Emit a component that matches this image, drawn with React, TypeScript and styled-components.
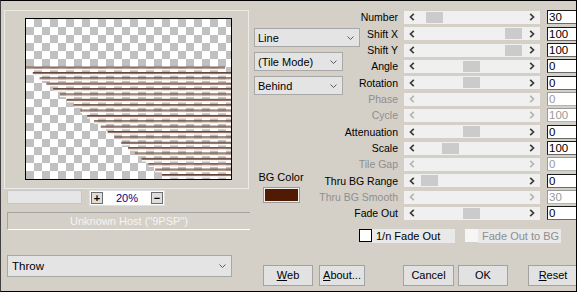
import React from 'react';
import styled, { createGlobalStyle } from 'styled-components';

const GlobalStyle = createGlobalStyle`
  html, body {
    margin: 0;
    padding: 0;
    background: #d4d0c8;
  }
  body {
    font-family: "Liberation Sans", Arial, sans-serif;
    font-size: 10.5px;
    color: #000;
  }
`;

const Window = styled.div`
  box-sizing: border-box;
  width: 577px;
  height: 292px;
  border: 1px solid #000;
  border-left-color: #404040;
  background: #d4d0c8;
  display: flex;
  overflow: hidden;
`;

const LeftColumn = styled.div`
  box-sizing: border-box;
  width: 249px;
  flex: none;
  padding: 9px 0 0 3px;
  display: flex;
  flex-direction: column;
`;

const PreviewFrame = styled.div`
  box-sizing: border-box;
  width: 245px;
  height: 179px;
  border: 1px solid #ecebe6;
  padding: 7px 0 0 20px;
`;

const PreviewBox = styled.div`
  width: 205px;
  height: 160px;
  border: 1px solid #000;
  svg {
    display: block;
  }
`;

const ZoomRow = styled.div`
  display: flex;
  margin: 1px 0 0 3px;
  gap: 7px;
`;

const ZoomBlank = styled.div`
  box-sizing: border-box;
  width: 75px;
  height: 14px;
  background: #e6e6e6;
  border: 1px solid #c6c6c6;
`;

const ZoomControl = styled.div`
  box-sizing: border-box;
  width: 76px;
  height: 16px;
  background: #fff;
  border: 1px solid #e0e0e0;
  display: flex;
  align-items: center;
  justify-content: space-between;
  padding: 0 1px;
`;

const ZoomButton = styled.div`
  box-sizing: border-box;
  width: 12px;
  height: 12px;
  border: 1px solid #6e6e6e;
  background: #dedede;
  display: flex;
  align-items: center;
  justify-content: center;
  font-weight: bold;
  font-size: 11px;
  line-height: 10px;
`;

const ZoomValue = styled.span`
  color: #000080;
  font-size: 11px;
`;

const HostBar = styled.div`
  box-sizing: border-box;
  margin: 6px 0 0 3px;
  width: 243px;
  height: 18px;
  border-top: 1px solid #a4a4a4;
  border-left: 1px solid #a4a4a4;
  border-bottom: 1px solid #fff;
  color: #f4f4f4;
  font-size: 11px;
  text-align: center;
  line-height: 16px;
`;

const Select = styled.div<{ $width: number; $top?: number; $left?: number }>`
  box-sizing: border-box;
  width: ${p => p.$width}px;
  height: 19px;
  margin-top: ${p => p.$top || 0}px;
  margin-left: ${p => p.$left || 0}px;
  flex: none;
  background: #e4e4e4;
  border: 1px solid #a8a8a8;
  display: flex;
  align-items: center;
  justify-content: space-between;
  padding: 0 5px 0 3px;
  font-size: 11px;
`;

const ThrowSelect = styled(Select)`
  height: 22px;
  padding-left: 4px;
  font-size: 11.5px;
`;

const RightColumn = styled.div`
  flex: 1;
  display: flex;
  flex-direction: column;
  padding-top: 8.3px;
`;

const ParamsGrid = styled.div`
  display: grid;
  grid-template-columns: 148px 136px 31px;
  grid-template-rows: repeat(13, 16.33px);
  column-gap: 6px;
  align-items: center;
`;

const ControlsColumn = styled.div`
  grid-column: 1;
  grid-row: 1 / span 13;
  align-self: start;
  justify-self: start;
  margin-left: 4px;
  width: 106px;
  display: flex;
  flex-direction: column;
  padding-top: 19px;
`;

const BgBlock = styled.div`
  margin: 76px 0 0 4px;
  width: 46px;
  display: flex;
  flex-direction: column;
  align-items: center;
`;

const BgLabel = styled.div`
  font-size: 11px;
  line-height: 12px;
  white-space: nowrap;
`;

const Swatch = styled.div<{ $color: string }>`
  box-sizing: border-box;
  margin-top: 4px;
  width: 37px;
  height: 16px;
  border: 1px solid #9a9a9a;
  box-shadow: inset 0 0 0 1px #f0f0f0;
  background: ${p => p.$color};
`;

const ParamLabel = styled.div<{ $row: number; $disabled?: boolean }>`
  grid-column: 1;
  grid-row: ${p => p.$row};
  justify-self: end;
  white-space: nowrap;
  line-height: 12px;
  color: ${p => (p.$disabled ? '#8e8e8e' : '#000')};
`;

const Slider = styled.div<{ $row: number }>`
  grid-column: 2;
  grid-row: ${p => p.$row};
  height: 13px;
  display: flex;
  align-items: center;
  background: #f0f0f0;
`;

const Arrow = styled.div`
  width: 16px;
  height: 100%;
  flex: none;
  display: flex;
  align-items: center;
  justify-content: center;
`;

const Track = styled.div`
  flex: 1;
  height: 100%;
  display: flex;
  align-items: center;
`;

const Thumb = styled.div<{ $pos: number }>`
  width: 17px;
  height: 11px;
  margin-left: ${p => p.$pos}px;
  background: #cbcbcb;
`;

const ValueBox = styled.div<{ $row: number; $disabled?: boolean }>`
  grid-column: 3;
  grid-row: ${p => p.$row};
  box-sizing: border-box;
  margin-left: 1px;
  height: 14px;
  background: #fff;
  border: 1px solid ${p => (p.$disabled ? '#b4b4b4' : '#6a6a6a')};
  border-left-color: ${p => (p.$disabled ? '#9a9a9a' : '#1a1a1a')};
  border-top-color: ${p => (p.$disabled ? '#9a9a9a' : '#1a1a1a')};
  padding-left: 1px;
  font-size: 11.5px;
  line-height: 12px;
  color: ${p => (p.$disabled ? '#9a9a9a' : '#000')};
`;

const CheckRow = styled.div`
  display: flex;
  align-items: center;
  margin: 7.4px 0 0 109px;
  height: 14px;
`;

const CheckItem = styled.div`
  display: flex;
  align-items: center;
  margin-right: 10px;
`;

const CheckBox = styled.div<{ $disabled?: boolean }>`
  box-sizing: border-box;
  width: 13px;
  height: 13px;
  background: ${p => (p.$disabled ? '#f6f6f6' : '#fff')};
  border: ${p => (p.$disabled ? 'none' : '1px solid #000')};
`;

const CheckLabel = styled.div<{ $disabled?: boolean }>`
  width: 83px;
  height: 14px;
  box-sizing: border-box;
  padding-left: 4px;
  background: #e9e9e9;
  font-size: 11px;
  line-height: 14px;
  white-space: nowrap;
  color: ${p => (p.$disabled ? '#8e8e8e' : '#000')};
`;

const ButtonRow = styled.div`
  display: flex;
  margin: 22px 0 0 13px;
`;

const Button = styled.div<{ $width: number; $gap?: number }>`
  box-sizing: border-box;
  flex: none;
  width: ${p => p.$width}px;
  height: 21px;
  margin-left: ${p => p.$gap || 0}px;
  background: #e2e2e2;
  border: 1px solid #a2a2a2;
  display: flex;
  align-items: center;
  justify-content: center;
  font-size: 11px;
`;

const Chevron = () => (
  <svg width="7" height="4" viewBox="0 0 7 4">
    <polyline points="0.5,0.5 3.5,3.5 6.5,0.5" fill="none" stroke="#5a5a5a" strokeWidth="1" />
  </svg>
);

const ArrowIcon = ({ dir, disabled }: { dir: 'left' | 'right'; disabled?: boolean }) => (
  <svg width="6" height="8" viewBox="0 0 6 8">
    <polyline
      points={dir === 'left' ? '4.8,0.8 1.5,4 4.8,7.2' : '1.2,0.8 4.5,4 1.2,7.2'}
      fill="none"
      stroke={disabled ? '#b4b4b4' : '#3c3c3c'}
      strokeWidth="1.7"
    />
  </svg>
);

const STRIPES = Array.from({ length: 21 }, (_, i) => i);

const Preview = () => (
  <svg width="205" height="160" viewBox="0 0 205 160">
    <defs>
      <pattern id="checker" width="16" height="16" patternUnits="userSpaceOnUse">
        <rect width="16" height="16" fill="#fff" />
        <rect x="8" y="0" width="8" height="8" fill="#c0c0c0" />
        <rect x="0" y="8" width="8" height="8" fill="#c0c0c0" />
      </pattern>
    </defs>
    <rect width="205" height="160" fill="url(#checker)" />
    {STRIPES.map(i => {
      const x = i * 6.8;
      const y = 47.6 + i * 5.37;
      const w = i === 0 ? 199 : 205 - x;
      return (
        <g key={i}>
          <rect x={x} y={y} width={w} height="1" fill="#5e4337" />
          <rect x={x} y={y + 1} width={w} height="1.2" fill="#927468" />
          <rect x={x} y={y + 2.2} width={w} height="1.5" fill="#fdf4f0" />
        </g>
      );
    })}
  </svg>
);

type Param = {
  label: string;
  value: string;
  thumb?: number;
  disabled?: boolean;
};

const PARAMS: Param[] = [
  { label: 'Number', value: '30', thumb: 6 },
  { label: 'Shift X', value: '100', thumb: 85 },
  { label: 'Shift Y', value: '100', thumb: 85 },
  { label: 'Angle', value: '0', thumb: 43 },
  { label: 'Rotation', value: '0', thumb: 43 },
  { label: 'Phase', value: '0', disabled: true },
  { label: 'Cycle', value: '100', disabled: true },
  { label: 'Attenuation', value: '0', thumb: 43 },
  { label: 'Scale', value: '100', thumb: 22 },
  { label: 'Tile Gap', value: '0', disabled: true },
  { label: 'Thru BG Range', value: '0', thumb: 1 },
  { label: 'Thru BG Smooth', value: '30', disabled: true },
  { label: 'Fade Out', value: '0', thumb: 43 },
];

const App = () => {
  return (
    <>
      <GlobalStyle />
      <Window>
        <LeftColumn>
          <PreviewFrame>
            <PreviewBox>
              <Preview />
            </PreviewBox>
          </PreviewFrame>
          <ZoomRow>
            <ZoomBlank />
            <ZoomControl>
              <ZoomButton>+</ZoomButton>
              <ZoomValue>20%</ZoomValue>
              <ZoomButton>−</ZoomButton>
            </ZoomControl>
          </ZoomRow>
          <HostBar>Unknown Host ("9PSP")</HostBar>
          <ThrowSelect $width={225} $top={25} $left={3}>
            <span>Throw</span>
            <Chevron />
          </ThrowSelect>
        </LeftColumn>

        <RightColumn>
          <ParamsGrid>
            <ControlsColumn>
              <Select $width={106}>
                <span>Line</span>
                <Chevron />
              </Select>
              <Select $width={89} $top={5}>
                <span>(Tile Mode)</span>
                <Chevron />
              </Select>
              <Select $width={89} $top={5}>
                <span>Behind</span>
                <Chevron />
              </Select>
              <BgBlock>
                <BgLabel>BG Color</BgLabel>
                <Swatch $color="#501a03" />
              </BgBlock>
            </ControlsColumn>

            {PARAMS.map((p, i) => (
              <React.Fragment key={p.label}>
                <ParamLabel $row={i + 1} $disabled={p.disabled}>
                  {p.label}
                </ParamLabel>
                <Slider $row={i + 1}>
                  <Arrow>
                    <ArrowIcon dir="left" disabled={p.disabled} />
                  </Arrow>
                  <Track>{p.thumb !== undefined && <Thumb $pos={p.thumb} />}</Track>
                  <Arrow>
                    <ArrowIcon dir="right" disabled={p.disabled} />
                  </Arrow>
                </Slider>
                <ValueBox $row={i + 1} $disabled={p.disabled}>
                  {p.value}
                </ValueBox>
              </React.Fragment>
            ))}
          </ParamsGrid>

          <CheckRow>
            <CheckItem>
              <CheckBox />
              <CheckLabel>1/n Fade Out</CheckLabel>
            </CheckItem>
            <CheckItem>
              <CheckBox $disabled />
              <CheckLabel $disabled>Fade Out to BG</CheckLabel>
            </CheckItem>
          </CheckRow>

          <ButtonRow>
            <Button $width={50}>
              <u>W</u>eb
            </Button>
            <Button $width={46} $gap={6}>
              <u>A</u>bout...
            </Button>
            <Button $width={51} $gap={38}>
              Cancel
            </Button>
            <Button $width={50} $gap={4}>
              OK
            </Button>
            <Button $width={50} $gap={20}>
              <u>R</u>eset
            </Button>
          </ButtonRow>
        </RightColumn>
      </Window>
    </>
  );
};

export default App;
